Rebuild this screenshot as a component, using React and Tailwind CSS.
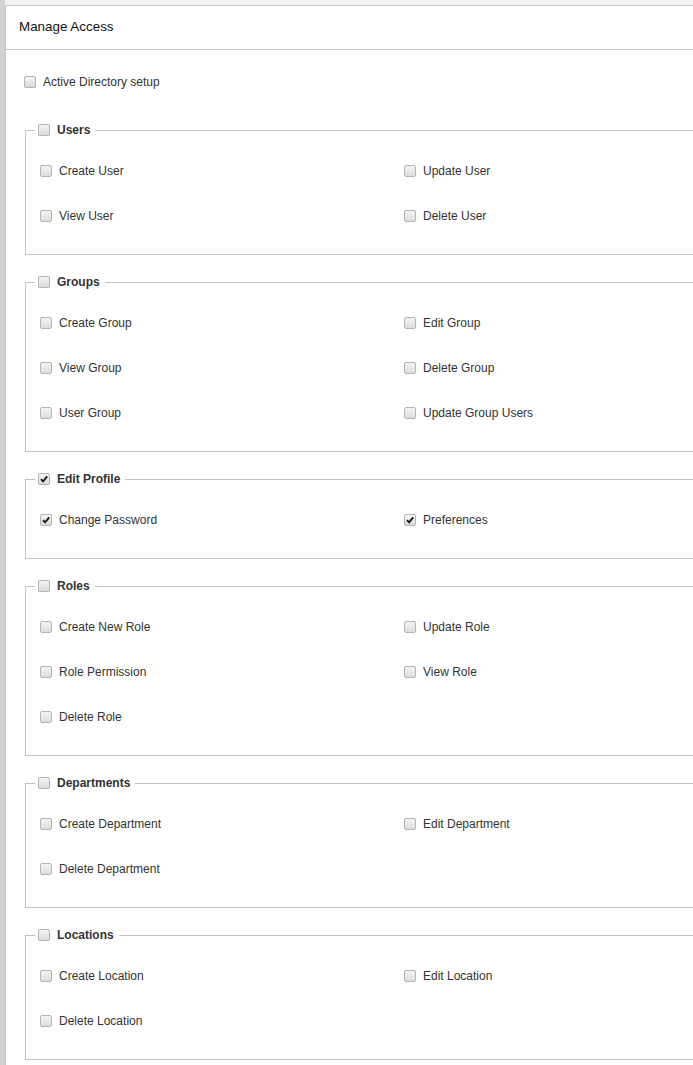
// Tela de permissoes: cada grupo tem um checkbox no titulo e os itens em duas colunas.

const GRUPOS = [
  { titulo: 'Users', itens: [['Create User', false], ['Update User', false], ['View User', false], ['Delete User', false]] },
  {
    titulo: 'Groups',
    itens: [['Create Group', false], ['Edit Group', false], ['View Group', false], ['Delete Group', false], ['User Group', false], ['Update Group Users', false]],
  },
  { titulo: 'Edit Profile', marcado: true, itens: [['Change Password', true], ['Preferences', true]] },
  {
    titulo: 'Roles',
    itens: [['Create New Role', false], ['Update Role', false], ['Role Permission', false], ['View Role', false], ['Delete Role', false]],
  },
  { titulo: 'Departments', itens: [['Create Department', false], ['Edit Department', false], ['Delete Department', false]] },
  { titulo: 'Locations', itens: [['Create Location', false], ['Edit Location', false], ['Delete Location', false]] },
];

function Check({ checked }) {
  return (
    <span className="w-[12px] h-[12px] shrink-0 rounded-[2px] border border-[#b4b4b4] bg-[linear-gradient(#f4f4f4,#dcdcdc)] flex items-center justify-center">
      {checked && (
        <svg width="10" height="10" viewBox="0 0 10 10">
          <path d="M2 5.2 L4.1 7.3 L8.2 2.4" fill="none" stroke="#1a1a1a" strokeWidth="1.9" />
        </svg>
      )}
    </span>
  );
}

function Item({ label, checked }) {
  return (
    <label className="flex items-center gap-[7px] h-[14px] text-[12px] text-[#333]">
      <Check checked={checked} />
      <span>{label}</span>
    </label>
  );
}

function Grupo({ grupo, first }) {
  return (
    <div className={first ? 'mt-[34px]' : 'mt-[20px]'}>
      <div className="flex h-[14px]">
        <div className="w-[10px] h-[7px] self-end border-l border-t border-[#c4c4c4]" />
        <div className="flex items-center gap-[7px] pl-[3px] pr-[5px] text-[12px] font-bold text-[#333]">
          <Check checked={grupo.marcado} />
          <span>{grupo.titulo}</span>
        </div>
        <div className="flex-1 h-[7px] self-end border-t border-[#c4c4c4]" />
      </div>
      <div className="border-l border-b border-[#c4c4c4] pl-[14px] pt-[27px] pb-[31px] grid grid-cols-[364px_364px] gap-y-[31px]">
        {grupo.itens.map(([label, checked]) => (
          <Item key={label} label={label} checked={checked} />
        ))}
      </div>
    </div>
  );
}

export default function App() {
  return (
    <div className="w-[693px] h-[1065px] overflow-hidden flex bg-[#f2f2f2] font-['Liberation_Sans',Arial,sans-serif]">
      <div className="w-[5px] shrink-0 bg-[#ebebeb] bg-[radial-gradient(#d2d2d2_0.8px,transparent_0.8px)] bg-[length:2px_2px]" />
      <div className="mt-[5px] w-[800px] shrink-0 bg-white border-l border-t border-[#c8c8c8]">
        <div className="h-[44px] flex items-center px-[13px] border-b border-[#c8c8c8] text-[13.4px] text-[#111]">
          Manage Access
        </div>
        <div className="pl-[18px] pt-[25px]">
          <Item label="Active Directory setup" />
          <div className="ml-[1px]">
            {GRUPOS.map((g, i) => (
              <Grupo key={g.titulo} grupo={g} first={i === 0} />
            ))}
          </div>
        </div>
      </div>
    </div>
  );
}
